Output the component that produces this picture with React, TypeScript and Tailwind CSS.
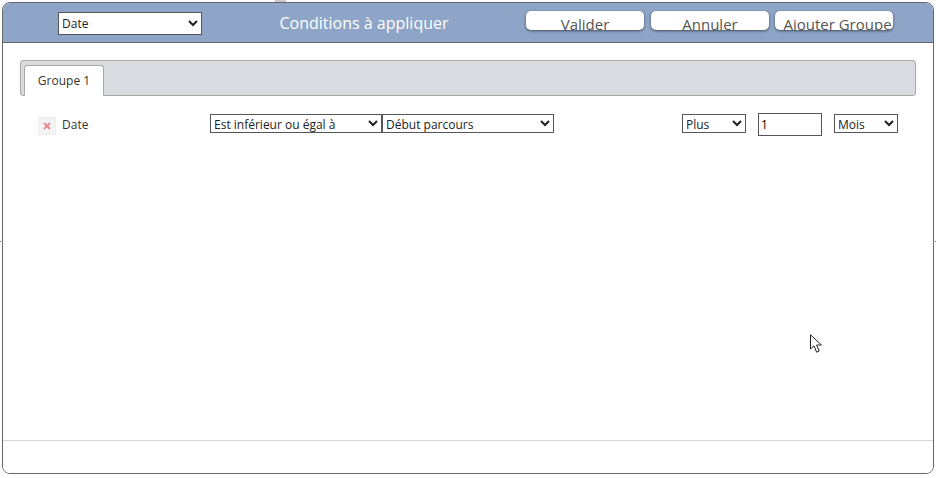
import React from 'react';

const font = "font-['Open_Sans','Noto_Sans',sans-serif]";

const Select: React.FC<{ label: string; className: string }> = ({ label, className }) => (
  <select
    defaultValue={label}
    className={`${className} appearance-auto bg-white border border-[#555] rounded-none text-[12px] text-[#222] indent-[-1px] outline-none`}
  >
    <option>{label}</option>
  </select>
);

const HeaderButton: React.FC<{ label: string; className: string }> = ({ label, className }) => (
  <button
    className={`${className} h-[19px] overflow-hidden bg-white rounded-[5px] shadow-[0_1px_3px_rgba(0,0,0,0.55)] text-[15px] leading-[19px] text-[#555] whitespace-nowrap pt-[4px]`}
  >
    {label}
  </button>
);

const App: React.FC = () => {
  return (
    <div className={`${font} relative w-[936px] h-[478px] bg-white overflow-hidden px-[2px] pt-[2px]`}>
      {/* bits of the page behind the dialog */}
      <div className="absolute left-[275px] top-0 w-[11px] h-[2px] bg-[#c8c8c8]" />
      <div className="absolute left-0 top-[241px] w-[3px] h-px bg-[#999]" />
      <div className="absolute right-0 top-[241px] w-[3px] h-px bg-[#999]" />

      <div className="w-[932px] h-[472px] border border-[#666] rounded-[8px] flex flex-col overflow-hidden bg-white">
        {/* Header */}
        <div className="h-[40px] shrink-0 bg-[#8ea5c8] border-b border-[#666] flex items-start">
          <Select label="Date" className="w-[144px] h-[23px] ml-[55px] mt-[9px] text-[#111]" />
          <div className="w-[324px] text-center text-[16px] leading-[22px] text-white mt-[9px]">Conditions à appliquer</div>
          <div className="flex mt-[8px]">
            <HeaderButton label="Valider" className="w-[118px]" />
            <HeaderButton label="Annuler" className="w-[118px] ml-[7px]" />
            <HeaderButton label="Ajouter Groupe" className="w-[118px] ml-[6px] pl-[7px]" />
          </div>
        </div>

        {/* Body */}
        <div className="flex-1 border-b border-[#d4d4d4] px-[17px] pt-[17px]">
          <div className="h-[36px] bg-[#d9dbe0] border border-[#a8a8a8] rounded-[3px] flex items-end pl-[3px]">
            <div className="w-[80px] h-[31px] -mb-px bg-white border border-[#a8a8a8] border-b-white rounded-t-[3px] text-[12px] leading-[29px] text-center text-[#333]">
              Groupe 1
            </div>
          </div>

          <div className="flex items-start mt-[17px]">
            <div className="w-[18px] h-[18px] ml-[18px] mt-[4px] bg-[#f3f3f5] border border-[#eeeeee] flex items-center justify-center">
              <svg width="8" height="8" viewBox="0 0 8 8">
                <path d="M1 1L7 7M7 1L1 7" stroke="#e58b90" strokeWidth="2" />
              </svg>
            </div>
            <div className="w-[148px] ml-[6px] text-[12px] leading-[18px] mt-[3px] text-[#333]">Date</div>
            <Select label="Est inférieur ou égal à" className="w-[172px] h-[19px] mt-[1px]" />
            <Select label="Début parcours" className="w-[172px] h-[19px] mt-[1px]" />
            <Select label="Plus" className="w-[64px] h-[19px] mt-[1px] ml-[128px]" />
            <input
              defaultValue="1"
              className="w-[64px] h-[23px] ml-[12px] border border-[#555] text-[12px] text-black px-[2px] outline-none"
            />
            <Select label="Mois" className="w-[64px] h-[19px] mt-[1px] ml-[12px]" />
          </div>
        </div>

        {/* Footer */}
        <div className="h-[32px] shrink-0 bg-white" />
      </div>

      {/* mouse pointer captured in the screenshot */}
      <svg className="absolute left-[810px] top-[334px]" width="13" height="20" viewBox="0 0 13 20">
        <path d="M0.5 0.8V15L4 11.8L6.6 18.2L9.2 17L6.6 11H11.5Z" fill="#fff" stroke="#222" strokeWidth="1" />
      </svg>
    </div>
  );
};

export default App;
